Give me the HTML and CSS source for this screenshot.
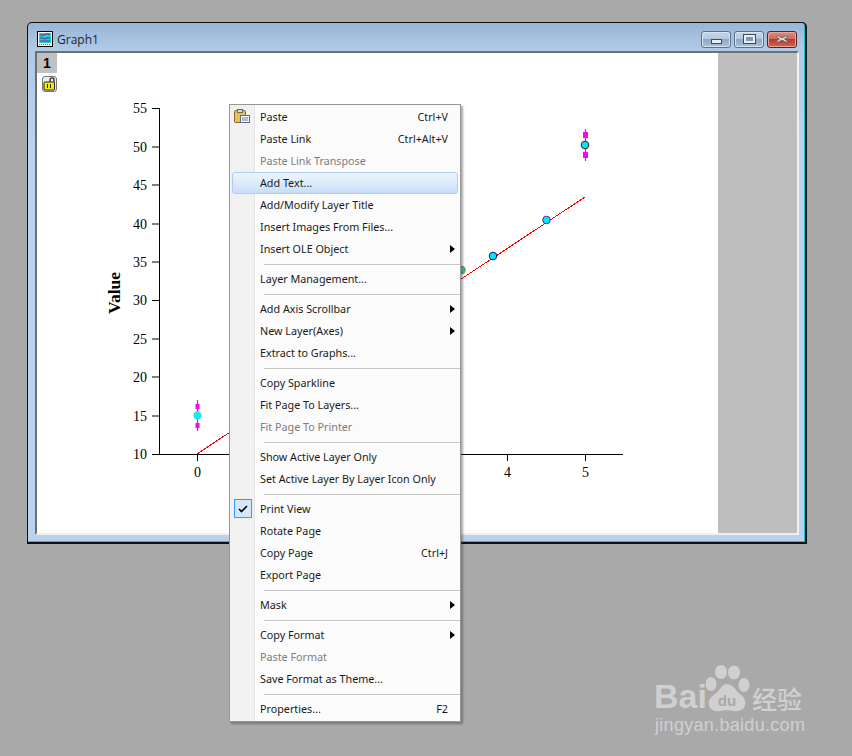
FILE: index.html
```html
<!DOCTYPE html>
<html lang="en">
<head>
<meta charset="utf-8">
<title>Graph1</title>
<link rel="stylesheet" href="styles.css">
</head>
<body>
<section class="window">
  <header class="titlebar">
    <svg class="app-icon" viewBox="0 0 16 16" width="16" height="16">
      <rect x="0.500" y="0.500" width="15" height="15" fill="#fff" stroke="#000"/>
      <rect x="2" y="2" width="12" height="10" fill="#19d4c8"/>
      <path d="M3 4h4l2-1h4M3 7h3l2 1 2-1h3M3 10h10" stroke="#7a1f9a" fill="none"/>
      <path d="M2 13.500h12" stroke="#d33" stroke-dasharray="1 1"/>
      <path d="M16 1v15H1" stroke="#000" fill="none"/>
    </svg>
    <span class="title">Graph1</span>
    <div class="controls">
      <div class="ctl"><span class="glyph-min"></span></div>
      <div class="ctl"><span class="glyph-max"></span></div>
      <div class="ctl close">
        <svg viewBox="0 0 16 10" width="16" height="10"><path d="M3.500 1.500 8 4l4.500-2.500 1 1.500L10.500 5l3 2-1 1.500L8 6l-4.500 2.500-1-1.500 3-2-3-2z" fill="#e8e8e8" stroke="#555" stroke-width="0.800"/></svg>
      </div>
    </div>
  </header>
  <div class="client">
    <div class="page">
      <div class="layers">
        <div class="layer-tab">1</div>
        <svg class="lock" viewBox="0 0 15 16" width="15" height="16">
          <rect x="0.500" y="0.500" width="14" height="15" rx="2.500" fill="#eee" stroke="#777"/>
          <path d="M8 6V3.800a2 2 0 0 1 4 0V6" fill="none" stroke="#222" stroke-width="1.300"/>
          <rect x="2" y="6" width="10.500" height="8" rx="1" fill="#f4ee00" stroke="#222"/>
          <path d="M5.500 8v4M8.500 8v4" stroke="#222"/>
        </svg>
      </div>
      <svg class="chart" viewBox="57 53 661 481" width="661" height="481">
        <g class="axes">
          <path d="M159.500 108V454M152 108.500h7M152 147h7M152 185h7M152 224h7M152 262h7M152 300.500h7M152 339h7M152 377h7M152 416h7M152 454.500H623M197.500 454v7M507.500 454v7M585.500 454v7"/>
        </g>
        <g class="ticks-y">
          <text x="147" y="113">55</text><text x="147" y="152">50</text><text x="147" y="190">45</text><text x="147" y="229">40</text><text x="147" y="267">35</text><text x="147" y="305">30</text><text x="147" y="344">25</text><text x="147" y="382">20</text><text x="147" y="421">15</text><text x="147" y="459">10</text>
        </g>
        <g class="ticks-x">
          <text x="197.500" y="477">0</text><text x="507.500" y="477">4</text><text x="585.500" y="477">5</text>
        </g>
        <text class="y-title" transform="translate(120 293) rotate(-90)">Value</text>
        <path class="fit" d="M197 454 585 197"/>
        <g class="err">
          <path d="M197.500 400v31M585.500 129v32"/>
          <path class="cap" d="M195.500 404h4v5h-4zM195.500 423h4v5h-4zM583 132h5v6h-5zM583 152h5v6h-5z"/>
        </g>
        <circle class="pt-plain" cx="197.500" cy="415.500" r="4"/>
        <circle class="pt p1" cx="585" cy="145" r="3.800"/>
        <circle class="pt p2" cx="546.500" cy="220" r="3.800"/>
        <circle class="pt p3" cx="493" cy="256" r="3.800"/>
        <circle class="pt p4" cx="461.500" cy="270" r="3.800"/>
      </svg>
      <div class="spare"></div>
    </div>
  </div>
</section>

<nav class="menu">
  <div class="row"><svg class="row-icon" viewBox="0 0 16 14" width="16" height="14"><rect x="0.500" y="1.500" width="11" height="12" rx="1" fill="#e9bf5e" stroke="#8a6a22"/><rect x="3.500" y="0.500" width="5" height="3" fill="#ddd" stroke="#666"/><rect x="6.500" y="6.500" width="9" height="7" fill="#f3f5f8" stroke="#5f6f86"/><path d="M8 9h6M8 11h6" stroke="#6f86a6"/></svg><span class="label">Paste</span><span class="key">Ctrl+V</span></div>
  <div class="row"><span class="label">Paste Link</span><span class="key">Ctrl+Alt+V</span></div>
  <div class="row off"><span class="label">Paste Link Transpose</span></div>
  <div class="row hot"><span class="label">Add Text...</span></div>
  <div class="row"><span class="label">Add/Modify Layer Title</span></div>
  <div class="row"><span class="label">Insert Images From Files...</span></div>
  <div class="row sub"><span class="label">Insert OLE Object</span></div>
  <div class="sep"></div>
  <div class="row"><span class="label">Layer Management...</span></div>
  <div class="sep"></div>
  <div class="row sub"><span class="label">Add Axis Scrollbar</span></div>
  <div class="row sub"><span class="label">New Layer(Axes)</span></div>
  <div class="row"><span class="label">Extract to Graphs...</span></div>
  <div class="sep"></div>
  <div class="row"><span class="label">Copy Sparkline</span></div>
  <div class="row"><span class="label">Fit Page To Layers...</span></div>
  <div class="row off"><span class="label">Fit Page To Printer</span></div>
  <div class="sep"></div>
  <div class="row"><span class="label">Show Active Layer Only</span></div>
  <div class="row"><span class="label">Set Active Layer By Layer Icon Only</span></div>
  <div class="sep"></div>
  <div class="row"><span class="check"><svg viewBox="0 0 10 8" width="10" height="8"><path d="M1 4l2.500 2.500L9 1" fill="none" stroke="#000" stroke-width="1.600"/></svg></span><span class="label">Print View</span></div>
  <div class="row"><span class="label">Rotate Page</span></div>
  <div class="row"><span class="label">Copy Page</span><span class="key">Ctrl+J</span></div>
  <div class="row"><span class="label">Export Page</span></div>
  <div class="sep"></div>
  <div class="row sub"><span class="label">Mask</span></div>
  <div class="sep"></div>
  <div class="row sub"><span class="label">Copy Format</span></div>
  <div class="row off"><span class="label">Paste Format</span></div>
  <div class="row"><span class="label">Save Format as Theme...</span></div>
  <div class="sep"></div>
  <div class="row"><span class="label">Properties...</span><span class="key">F2</span></div>
</nav>

<aside class="mark">
  <div class="mark-top">
    <span class="bai">Bai</span>
    <svg class="paw" viewBox="0 0 46 48" width="46" height="48">
      <ellipse cx="7" cy="19" rx="5.500" ry="7"/>
      <ellipse cx="17" cy="7" rx="6" ry="7"/>
      <ellipse cx="30" cy="7.500" rx="6" ry="7"/>
      <ellipse cx="40" cy="20" rx="5.500" ry="7"/>
      <path d="M23 19c6 0 8 6 12 9 5 4 7 7 6 12-1 5-7 7-11 6-4-1-10-1-14 0-5 1-10-1-11-6-1-5 2-8 6-11 5-3 6-10 12-10z"/>
      <text class="du" x="23" y="41">du</text>
    </svg>
    <span class="jing">经验</span>
  </div>
  <div class="site">jingyan.baidu.com</div>
</aside>
</body>
</html>
```
FILE: styles.css
```css
* { box-sizing: border-box; }
html, body { margin: 0; height: 100%; }
body {
  position: relative;
  width: 852px;
  height: 756px;
  overflow: hidden;
  background: #a9a9a9;
  font-family: "Noto Sans", sans-serif;
}

/* window on the desktop */
.window {
  position: absolute;
  left: 27px;
  top: 22px;
  width: 780px;
  height: 522px;
  display: flex;
  flex-direction: column;
  border: 1px solid #111;
  border-right-width: 2px;
  border-bottom-width: 2px;
  border-radius: 5px 5px 0 0;
  padding: 0 6px 7px 7px;
  background: linear-gradient(180deg, #9ab5d5 0, #b0c9e6 26px, #b9d2ee 120px, #b9d2ee 100%);
  box-shadow: inset -1px -1px 0 #17c4d6;
}
.titlebar {
  flex: none;
  height: 28px;
  display: flex;
  align-items: center;
  padding: 4px 0 0 2px;
}
.app-icon { flex: none; }
.title {
  margin-left: 4px;
  font: 12px "Open Sans", "Noto Sans", sans-serif;
  color: #1c2733;
}
.controls {
  margin-left: auto;
  margin-right: 2px;
  display: flex;
  gap: 3px;
}
.ctl {
  width: 30px;
  height: 17px;
  display: flex;
  align-items: center;
  justify-content: center;
  border: 1px solid #5d7088;
  border-radius: 3px;
  background: linear-gradient(180deg, #c4d6ea 0, #b4c9e0 45%, #8fa9c6 50%, #a9c1db 100%);
  box-shadow: inset 0 0 0 1px #d8e4f1;
}
.glyph-min {
  width: 11px;
  height: 5px;
  margin-top: 4px;
  background: #e9edf2;
  border: 1px solid #3d4a5a;
}
.glyph-max {
  width: 11px;
  height: 8px;
  background: #7f97b4;
  border: 2px solid #e9edf2;
  outline: 1px solid #3d4a5a;
}
.close {
  border-color: #5c1f2a;
  background: linear-gradient(180deg, #dc8f80 0, #cf6a59 45%, #b83a2a 50%, #cd6655 100%);
  box-shadow: inset 0 0 0 1px #e6a99c;
}

.client {
  flex: 1;
  min-height: 0;
  border-top: 2px solid #6f6f6f;
  border-left: 2px solid #6f6f6f;
  border-right: 2px solid #f2f2f2;
  border-bottom: 2px solid #efefef;
  display: flex;
}
.page {
  flex: 1;
  display: flex;
  background: #fff;
  min-width: 0;
}
.layers {
  flex: none;
  width: 20px;
  display: flex;
  flex-direction: column;
  align-items: center;
}
.layer-tab {
  width: 20px;
  height: 20px;
  background: #c0c0c0;
  text-align: center;
  font: bold 14px/20px "Liberation Sans", sans-serif;
  color: #000;
}
.lock { margin-top: 3px; margin-left: 4px; flex: none; }
.chart { flex: none; display: block; overflow: visible; }
.spare { flex: 1; background: #bebebe; }

/* chart */
.axes path { fill: none; stroke: #000; stroke-width: 1; }
.ticks-y text, .ticks-x text {
  font: 14px "Liberation Serif", serif;
  fill: #000;
}
.ticks-y text { text-anchor: end; }
.ticks-x text { text-anchor: middle; }
.y-title {
  font: bold 17.500px "Liberation Serif", serif;
  text-anchor: middle;
  fill: #000;
}
.fit { stroke: #f00; stroke-width: 1; fill: none; shape-rendering: crispEdges; }
.err path { stroke: #f0f; stroke-width: 1.200; fill: none; }
.err .cap { fill: #f0f; stroke: none; }
.pt { fill: #00e8ff; stroke-width: 1; }
.p1 { stroke: #5a1020; }
.p2 { stroke: #7a1a8a; }
.p3 { stroke: #14147a; }
.p4 { stroke: #7a8a20; fill: #30c8b8; }
.pt-plain { fill: #18e8f0; }

/* context menu */
.menu {
  position: absolute;
  left: 229px;
  top: 104px;
  width: 232px;
  height: 618px;
  padding: 1px 0;
  border: 1px solid #979797;
  background: linear-gradient(90deg, #f1f1f1 24px, #e2e3e3 24px, #e2e3e3 25px, #fff 25px, #fff 26px, #fbfbfb 26px);
  box-shadow: 2px 2px 2px rgba(60, 60, 60, .45);
}
.row {
  position: relative;
  height: 22px;
  display: flex;
  align-items: center;
  padding: 0 12px 1px 30px;
  font-size: 10.750px;
  color: #1a1a1a;
  white-space: nowrap;
}
.row.off { color: #7d7d7d; }
.row.hot {
  margin: 0 2px;
  padding-left: 27px;
  padding-right: 10px;
  padding-bottom: 1px;
  border: 1px solid #aeccf0;
  border-radius: 3px;
  background: linear-gradient(180deg, #edf5fd 0, #dcebfb 50%, #c5dff9 100%);
}
.key { margin-left: auto; }
.sub::after {
  content: "";
  position: absolute;
  right: 5px;
  top: 7px;
  border-left: 5px solid #000;
  border-top: 4px solid transparent;
  border-bottom: 4px solid transparent;
}
.sep {
  height: 8px;
  margin-left: 34px;
  background: linear-gradient(180deg, transparent 4px, #c5c5c5 4px, #c5c5c5 5px, #fff 5px, #fff 6px, transparent 6px);
}
.row-icon {
  position: absolute;
  left: 4px;
  top: 3px;
}
.check {
  position: absolute;
  left: 4px;
  top: 1px;
  width: 18px;
  height: 19px;
  display: flex;
  align-items: center;
  justify-content: center;
  border: 1px solid #3399ff;
  background: #d5e7f8;
}

/* watermark */
.mark {
  position: absolute;
  left: 654px;
  top: 664px;
  width: 154px;
  color: #d0d0d0;
}
.mark-top {
  display: flex;
  align-items: flex-end;
  height: 50px;
}
.bai {
  font: bold 34px/36px "Liberation Sans", sans-serif;
  width: 50px;
  flex: none;
}
.paw { flex: none; fill: #d0d0d0; margin-bottom: 1px; }
.du { font: bold 15px "Liberation Sans", sans-serif; fill: #a9a9a9; text-anchor: middle; }
.jing {
  font: 500 25px/32px "Noto Sans CJK SC", sans-serif;
  flex: none;
  margin-left: 2px;
}
.site {
  font: 18px/22px "Liberation Sans", sans-serif;
  letter-spacing: .3px;
  white-space: nowrap;
  padding-left: 1px;
}
```
